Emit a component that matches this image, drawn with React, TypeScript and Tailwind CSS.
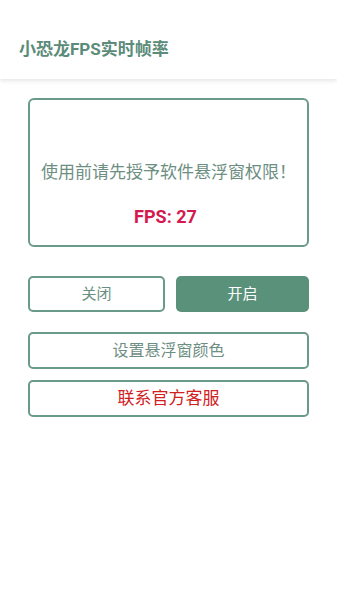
import React from "react";

export default function App() {
  const font = { fontFamily: 'Roboto, "Noto Sans CJK SC", sans-serif' };
  return (
    <div className="w-[337px] h-[600px] bg-white flex flex-col" style={font}>
      <div className="h-[79px] bg-white shadow-[0_2px_4px_rgba(0,0,0,0.10)] pt-[38px] pl-[19px] relative z-10">
        <div className="text-[17px] leading-[22px] font-bold text-[#5b8b79]">小恐龙FPS实时帧率</div>
      </div>
      <div className="flex flex-col px-[28px]">
        <div className="mt-[19px] h-[149px] border-2 border-[#6a9a88] rounded-[6px] flex flex-col items-center">
          <div className="mt-[60px] text-[17px] leading-[24px] text-[#6d8e82]">使用前请先授予软件悬浮窗权限！</div>
          <div className="mt-[21px] mr-[6px] text-[18px] leading-[24px] font-bold text-[#d3194f]">FPS: 27</div>
        </div>
        <div className="mt-[29px] flex gap-[11px]">
          <div className="flex-1 h-[36px] border-2 border-[#6a9a88] rounded-[5px] flex items-center justify-center text-[15px] text-[#6a8f81]">关闭</div>
          <div className="flex-1 h-[36px] bg-[#5a917b] rounded-[5px] flex items-center justify-center text-[15px] text-white">开启</div>
        </div>
        <div className="mt-[20px] h-[37px] border-2 border-[#6a9a88] rounded-[5px] flex items-center justify-center text-[16px] text-[#6e8e82]">设置悬浮窗颜色</div>
        <div className="mt-[11px] h-[37px] border-2 border-[#6a9a88] rounded-[5px] flex items-center justify-center text-[17px] text-[#d0211f]">联系官方客服</div>
      </div>
    </div>
  );
}
